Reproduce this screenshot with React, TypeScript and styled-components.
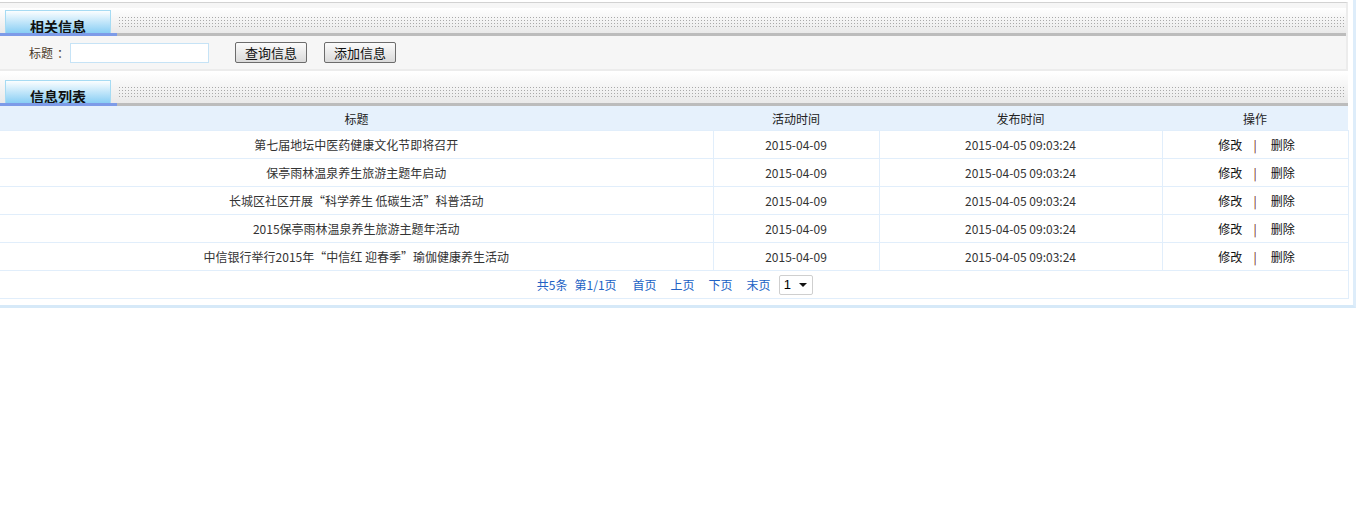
import React from 'react';
import styled, { createGlobalStyle } from 'styled-components';

const GlobalStyle = createGlobalStyle`
  html, body {
    margin: 0;
    padding: 0;
    background: #fff;
    font-family: "Liberation Sans", "Noto Sans CJK SC", sans-serif;
    font-size: 12px;
    color: #333;
  }
`;

const Frame = styled.div`
  width: 1356px;
  box-sizing: border-box;
  padding: 2px 5px 6px 0;
  border-right: 3px solid #deedfa;
  border-bottom: 3px solid #d6e9f8;
`;

const Section = styled.div`
  background: #f6f6f6;
  border-top: 1px solid #d2d2d2;
  border-right: 2px solid #ececec;
  padding-top: 5px;
`;

const SectionHead = styled.div<{ $top?: number }>`
  position: relative;
  display: flex;
  align-items: flex-end;
  height: 25px;
  padding-top: ${(p) => p.$top ?? 0}px;
  background: linear-gradient(#ffffff, #e9e9e9);
  border-bottom: 3px solid #bcbcbc;

  &::after {
    content: '';
    position: absolute;
    left: 0;
    bottom: -3px;
    width: 117px;
    height: 3px;
    background: #7d9be8;
  }
`;

const Tab = styled.div`
  width: 106px;
  height: 23px;
  margin-left: 5px;
  box-sizing: border-box;
  padding-top: 8px;
  border: 1px solid #a6dbf3;
  border-bottom: none;
  background: linear-gradient(#fbfeff, #88cef4);
  text-align: center;
  font-family: "Noto Sans CJK SC", sans-serif;
  font-weight: bold;
  font-size: 14px;
  line-height: 15px;
  color: #111;
`;

const Dots = styled.div`
  flex: 1;
  height: 11px;
  margin: 0 2px 5px 8px;
  align-self: flex-end;
  background: conic-gradient(at 1px 1px, transparent 75%, #a9a9a9 0) 0 0 / 3px 3px;
`;

const FormRow = styled.div`
  display: flex;
  align-items: center;
  height: 33px;
  padding-left: 29px;
  border-bottom: 2px solid #ececec;
`;

const Label = styled.span`
  display: inline-flex;
  gap: 4px;
  margin-right: 1px;
  font-family: "Noto Sans CJK SC", sans-serif;
  color: #4a3a2a;
  font-size: 12px;
`;

const Input = styled.input`
  width: 139px;
  height: 20px;
  box-sizing: border-box;
  border: 1px solid #c6e3f6;
  background: #fff;
  outline: none;
  margin: 0 26px 0 0;
  padding: 0 3px;
`;

const Button = styled.button`
  width: 72px;
  height: 21px;
  box-sizing: border-box;
  margin-right: 17px;
  padding: 0;
  border: 1px solid #6c6c6c;
  border-radius: 2px;
  background: linear-gradient(#fbfbfb, #dadada);
  font-family: "Noto Sans CJK SC", sans-serif;
  font-size: 13px;
  color: #111;
  line-height: 19px;
`;

const ListSection = styled.div`
  background: #fff;
  padding-top: 1px;
`;

const Table = styled.table`
  width: 1348px;
  border-collapse: collapse;
  table-layout: fixed;
  font-family: "Noto Sans CJK SC", sans-serif;
  font-size: 12px;
`;

const Th = styled.th<{ $w: number }>`
  width: ${(p) => p.$w}px;
  height: 24px;
  padding: 0;
  background: #e6f1fc;
  font-weight: normal;
  font-size: 12px;
  color: #222;
  text-align: center;
`;

const Td = styled.td`
  height: 27px;
  padding: 0;
  border: 1px solid #e1eefb;
  border-left: none;
  text-align: center;
  color: #333;
  white-space: nowrap;
`;

const Ops = styled.span`
  display: inline-flex;
  margin-left: 3px;
  color: #111;
`;

const Bar = styled.span`
  margin: 0 14px 0 11px;
  color: #6b1010;
`;

const PagerCell = styled.td`
  height: 27px;
  padding: 0;
  border: 1px solid #e1eefb;
  border-left: none;
  text-align: center;
`;

const Pager = styled.div`
  display: inline-flex;
  align-items: center;
  gap: 14px;
  margin-left: 2px;
  color: #2161c4;
  font-size: 12px;
`;

const PageInfo = styled.span`
  display: inline-flex;
  gap: 7px;
  margin-right: 2px;
`;

const Select = styled.div`
  display: inline-flex;
  align-items: center;
  justify-content: space-between;
  width: 34px;
  height: 20px;
  box-sizing: border-box;
  margin-left: -6px;
  padding: 0 5px 0 4px;
  border: 1px solid #cfcfcf;
  border-radius: 2px;
  background: #fff;
  color: #000;
  font-family: "Liberation Sans", sans-serif;
  font-size: 13px;
`;

const Caret = styled.span`
  width: 0;
  height: 0;
  border-left: 4px solid transparent;
  border-right: 4px solid transparent;
  border-top: 4px solid #111;
`;

const rows = [
  '第七届地坛中医药健康文化节即将召开',
  '保亭雨林温泉养生旅游主题年启动',
  '长城区社区开展“科学养生 低碳生活”科普活动',
  '2015保亭雨林温泉养生旅游主题年活动',
  '中信银行举行2015年“中信红 迎春季”瑜伽健康养生活动',
];

export default function App() {
  return (
    <>
      <GlobalStyle />
      <Frame>
        <Section>
          <SectionHead>
            <Tab>相关信息</Tab>
            <Dots />
          </SectionHead>
          <FormRow>
            <Label>
              <span>标题</span>
              <span>：</span>
            </Label>
            <Input type="text" />
            <Button>查询信息</Button>
            <Button>添加信息</Button>
          </FormRow>
        </Section>
        <ListSection>
          <SectionHead $top={6}>
            <Tab>信息列表</Tab>
            <Dots />
          </SectionHead>
          <Table>
            <thead>
              <tr>
                <Th $w={713}>标题</Th>
                <Th $w={166}>活动时间</Th>
                <Th $w={283}>发布时间</Th>
                <Th $w={186}>操作</Th>
              </tr>
            </thead>
            <tbody>
              {rows.map((title) => (
                <tr key={title}>
                  <Td>{title}</Td>
                  <Td>2015-04-09</Td>
                  <Td>2015-04-05 09:03:24</Td>
                  <Td>
                    <Ops>
                      <span>修改</span>
                      <Bar>|</Bar>
                      <span>删除</span>
                    </Ops>
                  </Td>
                </tr>
              ))}
              <tr>
                <PagerCell colSpan={4}>
                  <Pager>
                    <PageInfo>
                      <span>共5条</span>
                      <span>第1/1页</span>
                    </PageInfo>
                    <span>首页</span>
                    <span>上页</span>
                    <span>下页</span>
                    <span>末页</span>
                    <Select>
                      1
                      <Caret />
                    </Select>
                  </Pager>
                </PagerCell>
              </tr>
            </tbody>
          </Table>
        </ListSection>
      </Frame>
    </>
  );
}
